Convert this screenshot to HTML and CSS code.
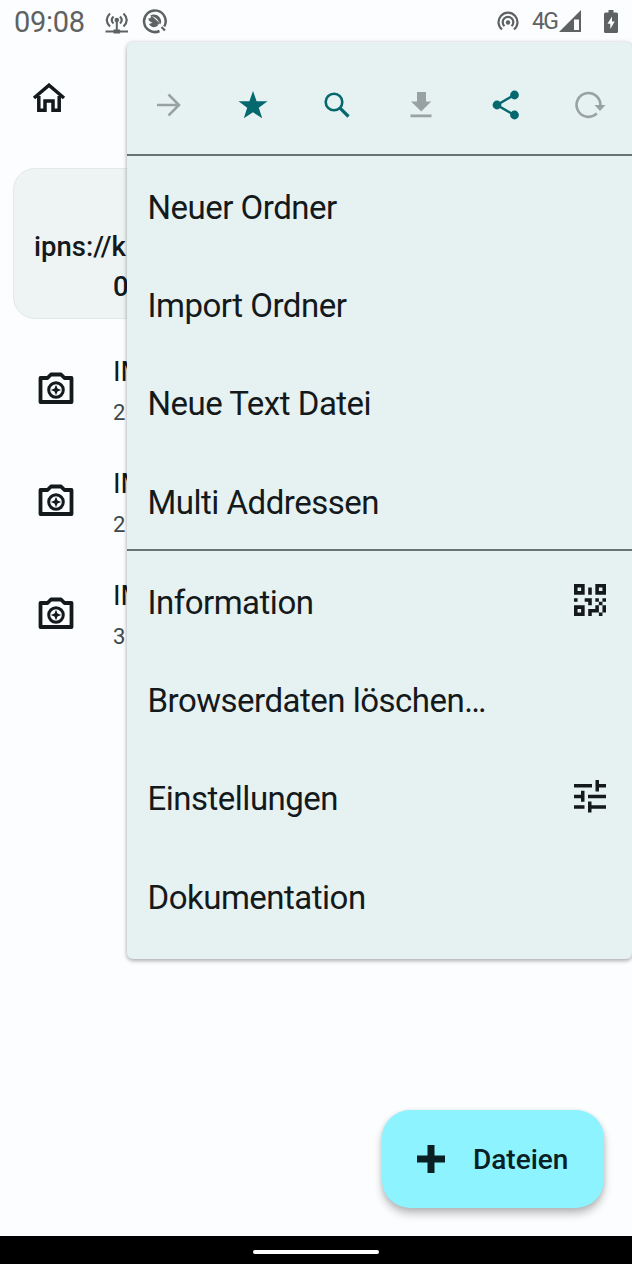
FILE: index.html
```html
<!DOCTYPE html>
<html lang="de">
<head>
<meta charset="utf-8">
<title>Dateien</title>
<link rel="stylesheet" href="styles.css">
</head>
<body>
<div class="screen">
  <header class="status">
    <span class="clock">09:08</span>
    <svg class="hotspot" width="24" height="24" viewBox="0 0 24 24" fill="none" stroke="currentColor" stroke-width="2.100"><path d="M5 3.500Q-1.500 10 5 16.500M8.500 6.500Q5 10 8.500 13.500M18.500 3.500Q25 10 18.500 16.500M15 6.500Q18.500 10 15 13.500"/><circle cx="11.800" cy="10" r="2.300" fill="currentColor" stroke="none"/><path d="M11.800 12V21M.5 21.500H23" stroke-width="2"/><path d="M8.500 19.500h6.600v4H8.500z" fill="currentColor" stroke="none"/></svg>
    <svg class="radar" width="26" height="26" viewBox="0 0 26 26" fill="none" stroke="currentColor"><path d="M17.500 23A10.800 10.800 0 1 1 22.300 18.500" stroke-width="2.500"/><path d="M19.500 19L23 22.500" stroke-width="2.200"/><path d="M8 7.500C13 4.500 19.500 8 19.200 14.500L18 16.500C16.500 11.500 13 8.500 8 7.500Z" fill="currentColor" stroke="none"/><path d="M6.300 10.500C11 8.500 15 12 16 17.500C12.500 20.500 8.500 19 7 16L10.500 14.800C8 14 6.500 12.500 6.300 10.500Z" fill="currentColor" stroke="none"/><path d="M9 8.500L17 16" stroke-width="2"/></svg>
    <span class="spacer"></span>
    <svg class="cast" width="22" height="21" viewBox="0 0 22 21" fill="none" stroke="currentColor" stroke-width="2.200"><path d="M5 18.500A9.500 9.500 0 1 1 17 18.500M7.500 15.200A5.300 5.300 0 1 1 14.500 15.200"/><circle cx="11" cy="11.500" r="2.200" fill="currentColor" stroke="none"/></svg>
    <span class="network">4G</span>
    <svg class="signal" width="22" height="22" viewBox="0 0 22 22"><path fill="currentColor" fill-rule="evenodd" d="M0 22L22 0V22ZM15 9.500V20H20V9.500Z"/></svg>
    <svg class="battery" width="14" height="23" viewBox="0 0 14 23"><path fill="currentColor" fill-rule="evenodd" d="M4.500 0h5v2.500H12.500Q14 2.500 14 4V21.500Q14 23 12.500 23H1.500Q0 23 0 21.500V4Q0 2.500 1.500 2.500H4.500ZM8 6.500L3.500 13.700H6.300V19L10.700 11.500H8Z"/></svg>
  </header>
  <div class="toolbar">
    <svg width="34" height="30" viewBox="0 0 34 30" fill="none" stroke="currentColor"><path stroke-width="3.500" d="M2 15L17 2.200L32 15M6.800 13V27.300H13V18H21V27.300H27.200V13"/></svg>
  </div>
  <main class="content">
    <section class="card"><div>ipns://k</div><div class="card-end">0</div></section>
    <ul class="files">
      <li class="file"><svg class="camera" width="36" height="33" viewBox="0 0 36 33"><use href="#cam"/></svg><div class="info"><div class="name">IM</div><div class="size">2</div></div></li>
      <li class="file"><svg class="camera" width="36" height="33" viewBox="0 0 36 33"><use href="#cam"/></svg><div class="info"><div class="name">IM</div><div class="size">2</div></div></li>
      <li class="file"><svg class="camera" width="36" height="33" viewBox="0 0 36 33"><use href="#cam"/></svg><div class="info"><div class="name">IM</div><div class="size">3</div></div></li>
    </ul>
  </main>
  <footer class="navbar"><span class="pill"></span></footer>

  <button class="fab">
    <svg width="28" height="28" viewBox="0 0 28 28"><path fill="currentColor" d="M10.500 0h7v10.500H28v7H17.500V28h-7V17.500H0v-7h10.500z"/></svg>
    <span>Dateien</span>
  </button>

  <nav class="menu">
    <div class="actions">
      <span class="action off"><svg width="24" height="24" viewBox="0 0 24 24" fill="none" stroke="currentColor" stroke-width="2.500"><path d="M0 12H22M11.500 1.500L22 12L11.500 22.500"/></svg></span>
      <span class="action"><svg width="30" height="28" viewBox="0 0 30 28"><path fill="currentColor" d="M15 0L18.600 10.300H29.500L20.800 16.800L24.200 27.300L15 21.300L5.800 27.300L9.200 16.800L.5 10.300H11.400Z"/></svg></span>
      <span class="action"><svg width="26" height="26" viewBox="0 0 26 26" fill="none" stroke="currentColor"><circle cx="10" cy="10" r="8.300" stroke-width="2.600"/><path stroke-width="3.200" d="M15.800 15.800L24.500 24.500"/></svg></span>
      <span class="action off"><svg width="22" height="26" viewBox="0 0 22 26"><path fill="currentColor" d="M7 0h9v9.500h5.200L11.300 19.500L1 9.500H7zM.5 22.500h21v2.700H.5z"/></svg></span>
      <span class="action"><svg width="28" height="30" viewBox="0 0 28 30"><path fill="none" stroke="currentColor" stroke-width="2.500" d="M23 4.500L5 15L23 25.500"/><g fill="currentColor"><circle cx="22.500" cy="5" r="4.400"/><circle cx="5" cy="15" r="4.400"/><circle cx="22.500" cy="25" r="4.400"/></g></svg></span>
      <span class="action off"><svg width="32" height="28" viewBox="0 0 32 28"><path fill="none" stroke="currentColor" stroke-width="2.600" d="M22.800 22.400A11.900 11.900 0 1 1 26.300 15"/><path fill="currentColor" d="M20.500 14H31.500L26 20Z"/></svg></span>
    </div>
    <ul class="entries">
      <li>Neuer Ordner</li>
      <li>Import Ordner</li>
      <li>Neue Text Datei</li>
      <li>Multi Addressen</li>
    </ul>
    <ul class="entries second">
      <li>Information
        <svg class="entry-icon" width="32" height="32" viewBox="0 0 9 9"><path fill="currentColor" fill-rule="evenodd" d="M0 0h3v3H0zM1 1v1h1V1zM6 0h3v3H6zM7 1v1h1V1zM0 6h3v3H0zM1 7v1h1V7zM4 1h1v2H4zM0 4h1v1H0zM3 4h2v2H4V5H3zM6 4h1v1h1V4h1v1H8v1h1v2H8v1H7V8H5v1H4V7h2V6h1V5H6zM7 6v2h1V6z"/></svg>
      </li>
      <li>Browserdaten löschen…</li>
      <li>Einstellungen
        <svg class="entry-icon" width="32" height="33" viewBox="0 0 32 33"><path fill="currentColor" d="M0 4h18v3.500H0zM21.500 0h3.500v4h7v3.500h-7v4h-3.500zM0 14.800h7v-4h3.500v11H7v-3.500H0zM14 14.800h18v3.500H14zM0 25.300h10.500v3.500H0zM14 21.500h3.500v3.800H32v3.500H17.500v3.800H14z"/></svg>
      </li>
      <li>Dokumentation</li>
    </ul>
  </nav>
</div>
<svg class="defs" width="0" height="0"><defs><g id="cam"><path fill="none" stroke="#14191b" stroke-width="3.800" stroke-linejoin="round" d="M2.500 6H9.500L13 2.500H23L26.500 6H33.500V30H2.500Z"/><circle cx="18" cy="18" r="7.300" fill="none" stroke="#14191b" stroke-width="3"/><path fill="#14191b" d="M18 12.800L19.500 16.500L23.200 18L19.500 19.500L18 23.200L16.500 19.500L12.800 18L16.500 16.500Z"/></g></defs></svg>
</body>
</html>
```

FILE: styles.css
```css
* { box-sizing: border-box; }
body { margin: 0; font-family: Roboto, "Liberation Sans", sans-serif; color: #14191b; background: #fbfdfe; }
ul { list-style: none; margin: 0; padding: 0; }
svg { display: block; flex: none; }
.defs { position: absolute; }
.screen { position: relative; width: 632px; height: 1264px; display: flex; flex-direction: column; overflow: hidden; background: #fbfdfe; }

.status { height: 42px; flex: none; display: flex; align-items: center; padding: 0 14px; color: #5f6263; }
.clock { font-size: 29px; letter-spacing: -.3px; line-height: 42px; padding-top: 1px; }
.hotspot { margin-left: 20px; margin-top: 1px; }
.radar { margin-left: 13px; }
.spacer { flex: 1; }
.network { font-size: 23px; letter-spacing: -1.800px; line-height: 42px; margin-left: 13px; padding-top: 1px; }
.signal { margin-left: 2px; }
.battery { margin-left: 23px; }

.toolbar { height: 113px; flex: none; padding: 41px 32px 0; }
.content { flex: 1; padding-top: 13px; }
.card { height: 151px; margin-left: 13px; padding: 58px 20px 0 20px; border: 1px solid #e2e8e8; border-radius: 22px; background: #eef4f4; font-size: 27.500px; font-weight: 500; line-height: 40px; }
.card-end { padding-left: 79px; }
.files { padding-top: 14px; }
.file { height: 112.300px; display: flex; align-items: center; padding-left: 38px; gap: 39px; }
.camera { margin-top: -1px; }
.info { padding-top: 5px; }
.name { font-size: 28px; line-height: 42px; }
.size { font-size: 22px; line-height: 40px; color: #3f484a; }

.navbar { height: 28px; flex: none; display: flex; align-items: center; justify-content: center; background: #000; }
.pill { width: 126px; height: 4px; border-radius: 2px; background: #fff; margin-top: 3px; }

.fab { position: absolute; left: 382px; top: 1110px; width: 222px; height: 98px; display: flex; align-items: center; gap: 28px; padding: 0 0 0 35px; border: 0; border-radius: 28px; background: #8cf3ff; color: #0a2024; font: 500 28px Roboto, sans-serif; box-shadow: 0 6px 9px rgba(0,0,0,.24), 0 1px 5px rgba(0,0,0,.1); }

.menu { position: absolute; left: 126.500px; top: 42px; width: 505.500px; height: 917px; border-radius: 6px; background: #e6f1f1; box-shadow: 0 2px 4px rgba(0,0,0,.28), 0 0 4px rgba(0,0,0,.12); }
.actions { height: 114px; padding-top: 13px; display: flex; border-bottom: 2px solid #687473; }
.action { flex: 1; display: flex; align-items: center; justify-content: center; color: #05686f; }
.off { color: #98a2a1; }
.entries li { height: 98.300px; display: flex; align-items: center; justify-content: space-between; padding: 4px 26px 0 21px; font-size: 33px; letter-spacing: -.5px; }
.entry-icon { margin-top: -4px; }
.second { border-top: 2px solid #687473; }
```
